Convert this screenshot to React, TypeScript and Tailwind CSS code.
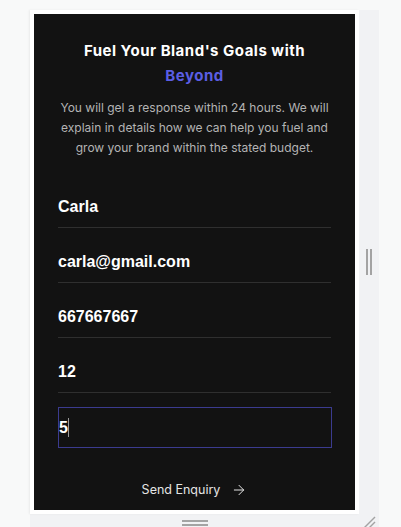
import { ArrowRight } from 'lucide-react'

const fields = ['Carla', 'carla@gmail.com', '667667667', '12']

export default function App() {
  return (
    <div className="min-h-screen bg-[#f8f9f9] pl-[30px] pt-[10px]">
      <div className="w-[349px]">
        <div className="flex">
          {/* preview frame */}
          <div className="w-[329px] bg-white p-1 shadow-[-1px_0_2px_rgba(0,0,0,0.06)]">
            <div className="flex h-[496px] flex-col bg-[#121212] px-6 pt-6 font-['Inter',sans-serif]">
              <h2 className="text-center text-[15px] font-bold leading-[25px] tracking-[0.5px] text-white">
                Fuel Your Bland's Goals with
                <br />
                <span className="text-[#5b5ee4]">Beyond</span>
              </h2>
              <p className="mt-[10px] text-center text-[12px] leading-[20px] text-[#b4b4b4]">
                You will gel a response within 24 hours. We will explain in details how we can help you fuel and grow your brand within the stated budget.
              </p>

              <div className="mt-[29px] flex flex-col gap-[14px] font-['Liberation_Sans',Arial,sans-serif]">
                {fields.map((v) => (
                  <div
                    key={v}
                    className="flex h-[41px] items-center border-b border-[#2f2f2f] text-[16px] font-bold text-white"
                  >
                    {v}
                  </div>
                ))}
                {/* focused field */}
                <div className="flex h-[41px] w-[274px] items-center text-[16px] font-bold text-white ring-1 ring-inset ring-[#3b3b8f]">
                  <span className="pl-px">5</span>
                  <span className="h-[19px] w-px bg-[#9a9a9a]" />
                </div>
              </div>

              <button className="mt-[32px] flex items-center justify-center gap-[11px] self-center text-[12.5px] leading-[20px] text-[#e4e4e4]">
                Send Enquiry
                <ArrowRight className="h-4 w-4" strokeWidth={1.5} />
              </button>
            </div>
          </div>
          {/* right resize strip */}
          <div className="flex w-5 items-center justify-center bg-[#f1f2f4]">
            <div className="flex gap-[2px]">
              <span className="h-[26px] w-[2px] bg-[#a3a3a3]" />
              <span className="h-[26px] w-[2px] bg-[#a3a3a3]" />
            </div>
          </div>
        </div>
        {/* bottom resize strip */}
        <div className="flex h-[17px] bg-[#f1f2f4]">
          <div className="flex w-[329px] flex-col items-center justify-center gap-[2px]">
            <span className="h-[2px] w-[26px] bg-[#a3a3a3]" />
            <span className="h-[2px] w-[26px] bg-[#a3a3a3]" />
          </div>
          <div className="flex w-5 items-end justify-center pb-[2px]">
            <svg width="14" height="14" viewBox="0 0 14 14">
              <line x1="2" y1="13" x2="13" y2="2" stroke="#a3a3a3" strokeWidth="1.5" />
              <line x1="7" y1="13" x2="13" y2="7" stroke="#a3a3a3" strokeWidth="1.5" />
            </svg>
          </div>
        </div>
      </div>
    </div>
  )
}
